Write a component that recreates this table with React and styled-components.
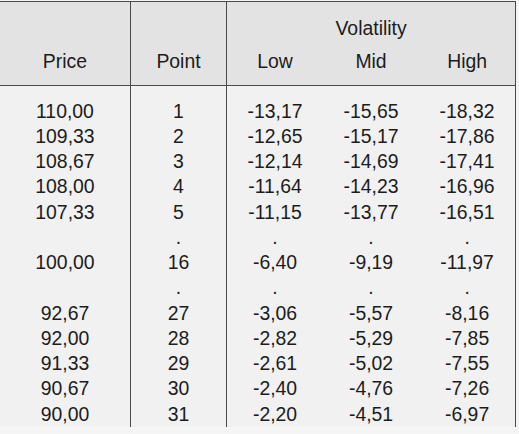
import React from "react";
import styled, { createGlobalStyle } from "styled-components";

const Global = createGlobalStyle`
  html, body { margin: 0; padding: 0; background: #f5f5f5; }
  body { font-family: "Liberation Sans", Arial, sans-serif; }
`;

const Table = styled.table`
  border-collapse: collapse;
  table-layout: fixed;
  width: 516px;
  margin-top: 1px;
  border-top: 1.5px solid #4a4a4a;
  border-right: 1.5px solid #4a4a4a;
  font-family: "Liberation Sans", Arial, sans-serif;
  font-size: 19.4px;
  line-height: 25.25px;
  color: #1c1c1c;
`;

const Head = styled.thead`
  background: #e3e3e3;
  border-bottom: 1.5px solid #4a4a4a;
`;

const Body = styled.tbody`
  background: #f1f1f1;
  tr:first-child td { padding-top: 13px; }
`;

const HeadCell = styled.th`
  font-weight: normal;
  text-align: center;
  vertical-align: ${(p) => (p.$bottom ? "bottom" : "middle")};
  padding: ${(p) => (p.$top ? "13.5px 0 4px" : "4px 0 10.5px")};
  border-right: ${(p) => (p.$divider ? "1.5px solid #4a4a4a" : "none")};
`;

const Cell = styled.td`
  text-align: center;
  padding: 0;
  border-right: ${(p) => (p.$divider ? "1.5px solid #4a4a4a" : "none")};
`;

const rows = [
  ["110,00", "1", "-13,17", "-15,65", "-18,32"],
  ["109,33", "2", "-12,65", "-15,17", "-17,86"],
  ["108,67", "3", "-12,14", "-14,69", "-17,41"],
  ["108,00", "4", "-11,64", "-14,23", "-16,96"],
  ["107,33", "5", "-11,15", "-13,77", "-16,51"],
  ["", ".", ".", ".", "."],
  ["100,00", "16", "-6,40", "-9,19", "-11,97"],
  ["", ".", ".", ".", "."],
  ["92,67", "27", "-3,06", "-5,57", "-8,16"],
  ["92,00", "28", "-2,82", "-5,29", "-7,85"],
  ["91,33", "29", "-2,61", "-5,02", "-7,55"],
  ["90,67", "30", "-2,40", "-4,76", "-7,26"],
  ["90,00", "31", "-2,20", "-4,51", "-6,97"],
];

export default function App() {
  return (
    <>
      <Global />
      <Table>
        <colgroup>
          <col style={{ width: 130 }} />
          <col style={{ width: 96 }} />
          <col style={{ width: 96 }} />
          <col style={{ width: 96 }} />
          <col style={{ width: 96 }} />
        </colgroup>
        <Head>
          <tr>
            <HeadCell rowSpan={2} $bottom $divider>Price</HeadCell>
            <HeadCell rowSpan={2} $bottom $divider>Point</HeadCell>
            <HeadCell colSpan={3} $top>Volatility</HeadCell>
          </tr>
          <tr>
            <HeadCell>Low</HeadCell>
            <HeadCell>Mid</HeadCell>
            <HeadCell>High</HeadCell>
          </tr>
        </Head>
        <Body>
          {rows.map((r, i) => (
            <tr key={i}>
              {r.map((v, j) => (
                <Cell key={j} $divider={j < 2}>{v}</Cell>
              ))}
            </tr>
          ))}
        </Body>
      </Table>
    </>
  );
}
